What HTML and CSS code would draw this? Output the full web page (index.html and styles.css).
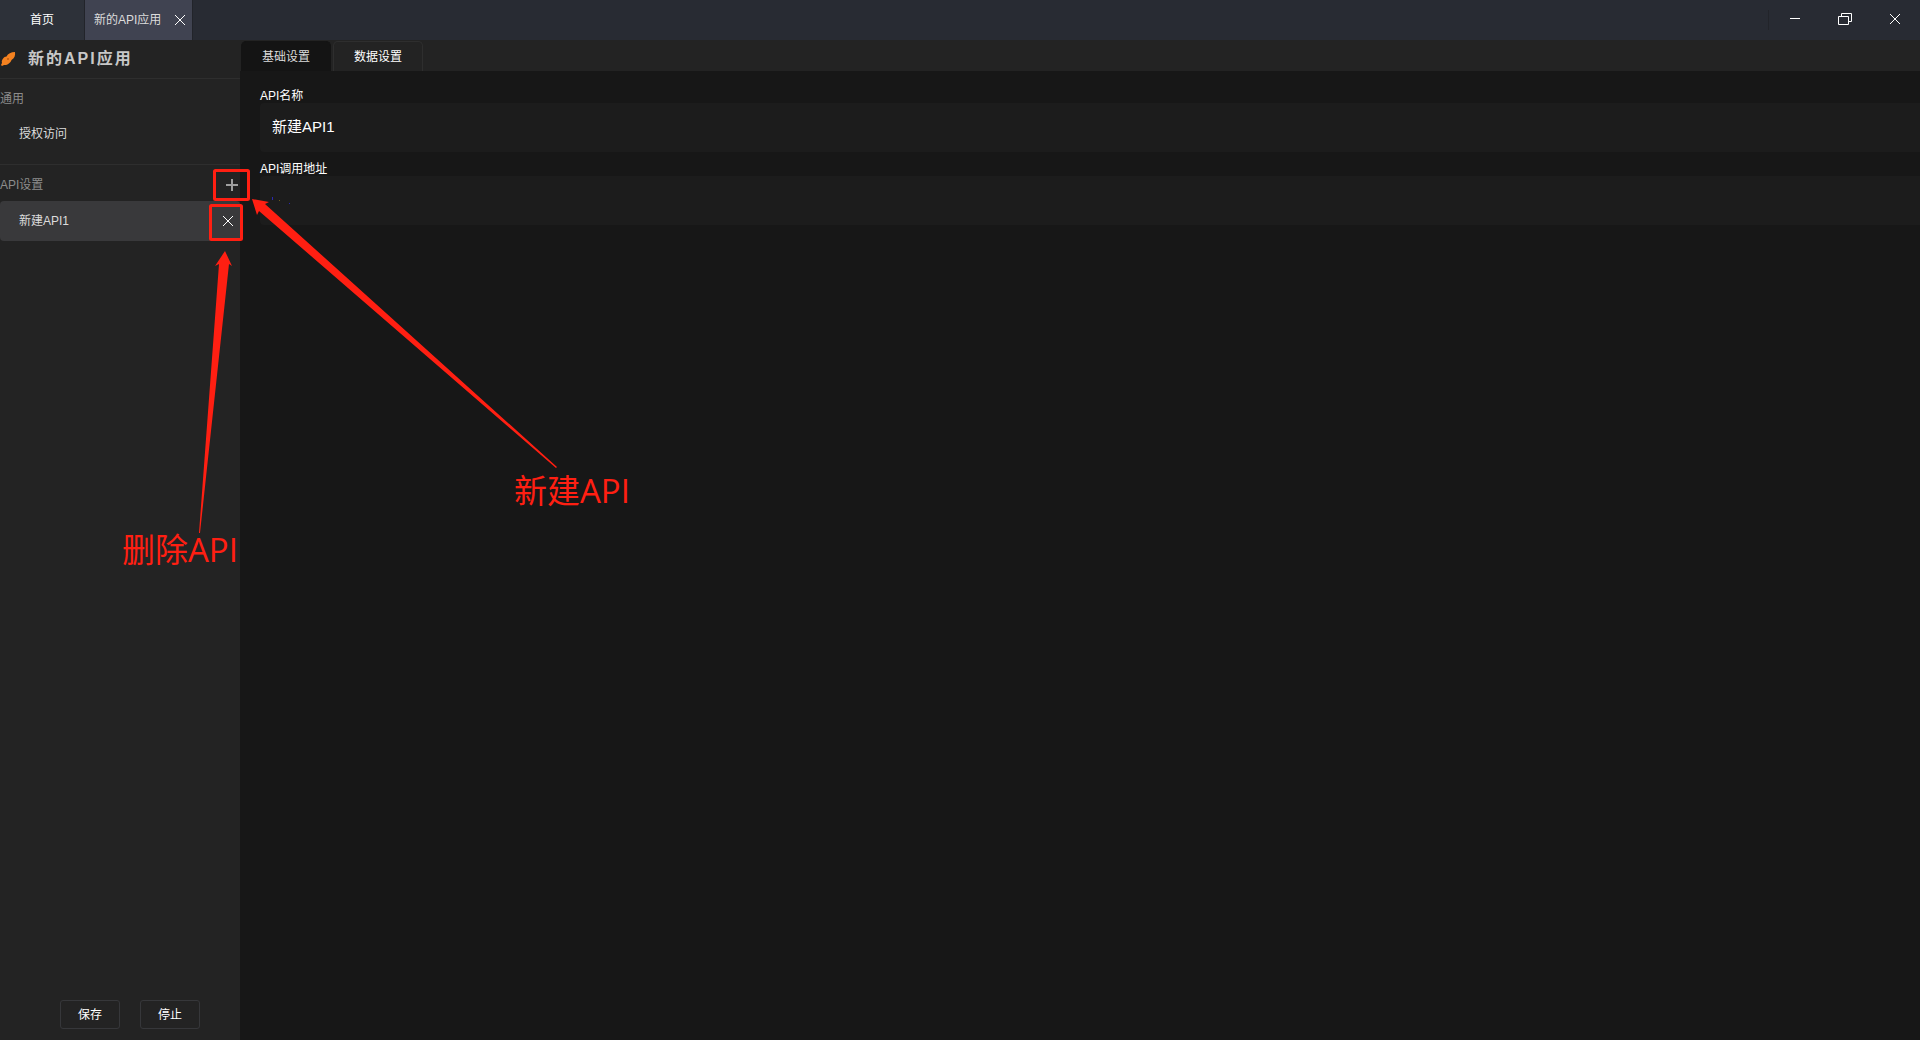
FILE: index.html
```html
<!DOCTYPE html>
<html lang="zh-CN">
<head>
    <meta charset="UTF-8">
    <meta name="viewport" content="width=device-width, initial-scale=1.0">
    <title>新的API应用</title>
    <link rel="stylesheet" href="styles.css">
</head>
<body>
    <header class="titlebar">
        <button class="page-tab home">首页</button>
        <div class="page-tab current">
            <span>新的API应用</span>
            <button class="icon-button" aria-label="关闭标签">
                <svg width="12" height="12" viewBox="0 0 12 12"><path d="M1 1L11 11M11 1L1 11"/></svg>
            </button>
        </div>
        <div class="window-buttons">
            <button aria-label="最小化">
                <svg width="10" height="12" viewBox="0 0 10 12"><path d="M0 5.5H10"/></svg>
            </button>
            <button aria-label="还原">
                <svg width="14" height="12" viewBox="0 0 14 12"><path d="M.5 3.5H10.500V11.500H.5ZM3.500 3.500V.5H13.500V8.500H10.500"/></svg>
            </button>
            <button aria-label="关闭">
                <svg width="12" height="12" viewBox="0 0 12 12"><path d="M1 1L11 11M11 1L1 11"/></svg>
            </button>
        </div>
    </header>
    <div class="workspace">
        <aside class="sidebar">
            <h1 class="app-title">
                <svg width="16" height="16" viewBox="0 0 16 16"><path d="M15 1C15.500 4.500 14.500 7.500 11.500 9C10.500 12 7 14.500 4 14L2 15L1 14L2 12C1 9 4 5.500 6.500 5.500C8 2.500 11 1 15 1Z"/><circle cx="8" cy="8" r="1"/></svg>
                <span>新的API应用</span>
            </h1>
            <div class="group">
                <div class="group-head">通用</div>
                <a class="item" href="#auth">授权访问</a>
            </div>
            <div class="group">
                <div class="group-head">
                    <span>API设置</span>
                    <button class="icon-button add" aria-label="新建API">
                        <svg width="12" height="12" viewBox="0 0 12 12"><path d="M0 6H12M6 0V12"/></svg>
                    </button>
                </div>
                <div class="item selected">
                    <a href="#api1">新建API1</a>
                    <button class="icon-button" aria-label="删除API">
                        <svg width="12" height="12" viewBox="0 0 12 12"><path d="M1 1L11 11M11 1L1 11"/></svg>
                    </button>
                </div>
            </div>
            <div class="actions">
                <button>保存</button>
                <button>停止</button>
            </div>
        </aside>
        <main class="content">
            <nav class="tabs">
                <button class="active">基础设置</button>
                <button>数据设置</button>
            </nav>
            <form class="settings">
                <label for="api-name">API名称</label>
                <input id="api-name" type="text" value="新建API1">
                <label for="api-url">API调用地址</label>
                <input id="api-url" type="text">
            </form>
        </main>
    </div>

    <!-- help marks over the page -->
    <div class="marks">
        <svg width="640" height="600" viewBox="0 0 640 600">
            <rect x="214.500" y="170.500" width="34" height="29" rx="1"/>
            <rect x="210.500" y="205.500" width="31" height="34" rx="1"/>
            <path d="M252 199L269 202L265 204L557 467L556 468L259 211L257 215Z"/>
            <path d="M225 251L232 266L229 264L200 533H199L219 264L215 266Z"/>
            <path class="speck-blue" d="M272 197h1v3h-1zM289 203h1v1h-1z"/>
            <path class="speck" d="M279 200h1v1h-1z"/>
        </svg>
        <span class="mark-text create">新建API</span>
        <span class="mark-text remove">删除API</span>
    </div>
</body>
</html>
```
FILE: styles.css
```css
* {
    box-sizing: border-box;
}
body {
    margin: 0;
    height: 100vh;
    display: flex;
    flex-direction: column;
    overflow: hidden;
    background-color: #171717;
    color: #fff;
    font-family: "Liberation Sans", "Noto Sans CJK SC", sans-serif;
    font-size: 12px;
    line-height: 16px;
}
button {
    margin: 0;
    padding: 0;
    border: none;
    background-color: transparent;
    color: inherit;
    font: inherit;
    cursor: pointer;
}
a {
    color: inherit;
    text-decoration: none;
}
svg {
    display: block;
    fill: none;
    stroke: currentColor;
}
.titlebar {
    display: flex;
    flex: none;
    height: 40px;
    background-color: #282b33;
}
.page-tab {
    display: flex;
    align-items: center;
    justify-content: center;
    border-right: 1px solid #22242a;
}
.home {
    width: 85px;
    background-color: #2d3139;
}
.current {
    justify-content: space-between;
    width: 108px;
    padding: 0 6px 0 9px;
    background-color: #404351;
    color: #dcdcdc;
}
.current .icon-button {
    color: #fff;
}
.window-buttons {
    display: flex;
    align-items: flex-start;
    margin-left: auto;
}
.window-buttons::before {
    content: "";
    width: 1px;
    height: 20px;
    margin: 10px 1px 0 0;
    background-color: #22242a;
}
.window-buttons button {
    display: flex;
    align-items: center;
    justify-content: center;
    width: 50px;
    height: 38px;
}
.workspace {
    display: flex;
    flex: 1;
    min-height: 0;
}
.sidebar {
    display: flex;
    flex-direction: column;
    flex: none;
    width: 240px;
    background-color: #232323;
    color: #dcdcdc;
}
.app-title {
    display: flex;
    align-items: center;
    gap: 12px;
    height: 39px;
    margin: 0;
    border-bottom: 1px solid #2e2e2e;
    color: #c8c8c8;
    font-size: 16px;
    letter-spacing: 2px;
}
.app-title svg {
    fill: #f58220;
    stroke: none;
}
.app-title circle {
    fill: #b85a10;
}
.group {
    padding-bottom: 11px;
    border-bottom: 1px solid #2e2e2e;
}
.group + .group {
    border-bottom: none;
}
.group-head {
    display: flex;
    align-items: center;
    justify-content: space-between;
    height: 36px;
    padding-top: 3px;
    color: #8c8c8c;
}
.add {
    margin-right: 2px;
    color: #a0a0a0;
}
.add svg {
    stroke-width: 2;
}
.item {
    display: flex;
    align-items: center;
    justify-content: space-between;
    height: 38px;
    padding: 0 6px 0 19px;
}
.selected {
    height: 40px;
    border-radius: 4px;
    background-color: #39393b;
}
.selected .icon-button {
    color: #fff;
}
.actions {
    display: flex;
    gap: 20px;
    margin-top: auto;
    padding: 0 0 11px 60px;
}
.actions button {
    width: 60px;
    height: 29px;
    border: 1px solid #36373a;
    border-radius: 3px;
    color: #fff;
}
.content {
    flex: 1;
    min-width: 0;
}
.tabs {
    display: flex;
    gap: 2px;
    height: 31px;
    padding: 1px 0 0 1px;
    background-color: #232323;
}
.tabs button {
    width: 90px;
    border: 1px solid #2e2e2e;
    border-bottom: none;
    border-radius: 5px 5px 0 0;
}
.tabs .active {
    border-color: #141414;
    background-color: #141414;
    color: #dcdcdc;
}
.settings {
    display: flex;
    flex-direction: column;
    padding: 18px 0 0 20px;
}
.settings label {
    line-height: 14px;
}
.settings input {
    height: 49px;
    margin-bottom: 10px;
    padding: 0 12px 4px;
    border: none;
    border-radius: 4px 0 0 4px;
    outline: none;
    background-color: #1c1c1c;
    color: #fff;
    font-family: inherit;
    font-size: 15px;
}
.marks {
    position: absolute;
    top: 0;
    left: 0;
    color: #ff1f12;
    pointer-events: none;
}
.marks rect {
    stroke-width: 3;
}
.marks path {
    fill: currentColor;
    stroke: none;
}
.marks .speck-blue {
    fill: #2a2ab0;
}
.marks .speck {
    fill: #6b5a20;
}
.mark-text {
    position: absolute;
    font-family: "Open Sans", "Noto Sans CJK SC", sans-serif;
    font-size: 33px;
    line-height: 40px;
    white-space: nowrap;
}
.create {
    top: 471px;
    left: 514px;
}
.remove {
    top: 530px;
    left: 122px;
}
```
